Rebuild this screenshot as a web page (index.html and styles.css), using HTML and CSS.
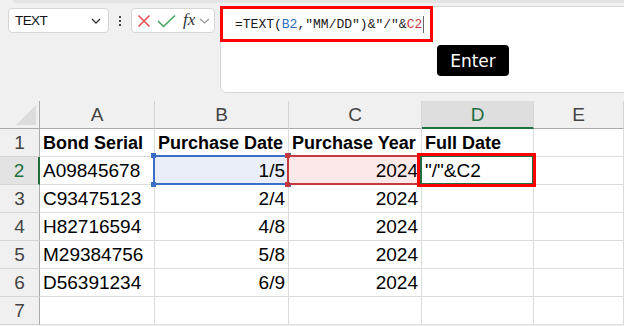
FILE: index.html
```html
<!DOCTYPE html>
<html>
<head>
<meta charset="utf-8">
<link rel="stylesheet" href="styles.css">
</head>
<body>
<div class="topband"></div>
<div class="bar">
  <div class="namebox">
    <span class="nb-text">TEXT</span>
    <svg class="nb-chev" width="10" height="6" viewBox="0 0 10 6"><polyline points="1,1 5,5 9,1" fill="none" stroke="#333" stroke-width="1.3"/></svg>
  </div>
  <div class="dots"><i></i><i></i><i></i></div>
  <div class="fxbox">
    <svg class="ic" width="14" height="14" viewBox="0 0 14 14"><path d="M1.5 1.5 L12.5 12.5 M12.5 1.5 L1.5 12.5" stroke="#e5484d" stroke-width="1.5" fill="none"/></svg>
    <svg class="ic" width="19" height="14" viewBox="0 0 19 14"><polyline points="1,7 6.5,12.5 18,1.5" stroke="#3da35a" stroke-width="1.5" fill="none"/></svg>
    <span class="fx">fx</span>
    <svg class="fx-chev" width="11" height="6" viewBox="0 0 11 6"><polyline points="1,1 5.5,5 10,1" fill="none" stroke="#999" stroke-width="1.2"/></svg>
  </div>
  <div class="formula">
    <div class="annot"><span class="ftext">=TEXT(<span class="fb">B2</span>,"MM/DD")&amp;"/"&amp;<span class="fc">C2</span></span><span class="caret"></span></div>
    <div class="enter">Enter</div>
  </div>
</div>
<div class="sheet">
  <div class="corner"><svg width="20" height="20" viewBox="0 0 20 20"><polygon points="20,0 20,20 0,20" fill="#dcdcdc"/></svg></div>
  <div class="ch">A</div><div class="ch">B</div><div class="ch">C</div><div class="ch ch-sel">D</div><div class="ch">E</div>

  <div class="rh">1</div>
  <div class="c b">Bond Serial</div><div class="c b">Purchase Date</div><div class="c b">Purchase Year</div><div class="c b">Full Date</div><div class="c"></div>

  <div class="rh rh-sel">2</div>
  <div class="c">A09845678</div>
  <div class="c r ref-b">1/5<i class="box"></i><i class="sq tl"></i><i class="sq tr"></i><i class="sq bl"></i><i class="sq br"></i></div>
  <div class="c r ref-c">2024<i class="box"></i><i class="sq tl"></i><i class="sq tr"></i><i class="sq bl"></i><i class="sq br"></i></div>
  <div class="c active">"/"&amp;C2<i class="green"></i><i class="redmark"></i></div>
  <div class="c"></div>

  <div class="rh">3</div>
  <div class="c">C93475123</div><div class="c r">2/4</div><div class="c r">2024</div><div class="c"></div><div class="c"></div>

  <div class="rh">4</div>
  <div class="c">H82716594</div><div class="c r">4/8</div><div class="c r">2024</div><div class="c"></div><div class="c"></div>

  <div class="rh">5</div>
  <div class="c">M29384756</div><div class="c r">5/8</div><div class="c r">2024</div><div class="c"></div><div class="c"></div>

  <div class="rh">6</div>
  <div class="c">D56391234</div><div class="c r">6/9</div><div class="c r">2024</div><div class="c"></div><div class="c"></div>

  <div class="rh">7</div>
  <div class="c"></div><div class="c"></div><div class="c"></div><div class="c"></div><div class="c"></div>
</div>
</body>
</html>
```
FILE: styles.css
```css
* { box-sizing: border-box; }
html, body { margin: 0; padding: 0; }
body {
  width: 624px;
  height: 326px;
  overflow: hidden;
  background: #f0f0f0;
  font-family: "Liberation Sans", Arial, sans-serif;
}
.topband {
  height: 3px;
  margin-left: 13px;
  background: #e3e3e3;
  border-bottom-left-radius: 4px;
}
.bar {
  display: flex;
  align-items: flex-start;
  height: 98px;
}
.namebox {
  margin: 5px 0 0 8px;
  width: 101px;
  height: 25px;
  background: #fff;
  border: 1px solid #d6d6d6;
  border-radius: 4px;
  display: flex;
  align-items: center;
  justify-content: space-between;
  padding: 0 7px 0 6px;
}
.nb-text {
  font-family: "Liberation Sans", Arial, sans-serif;
  font-size: 13.5px;
  letter-spacing: -0.6px;
  color: #111;
}
.dots {
  width: 22px;
  height: 25px;
  margin-top: 5px;
  display: flex;
  flex-direction: column;
  align-items: center;
  justify-content: center;
  gap: 2px;
}
.dots i {
  display: block;
  width: 2px;
  height: 2px;
  background: #444;
}
.fxbox {
  margin-top: 5px;
  width: 84px;
  height: 25px;
  background: #fff;
  border: 1px solid #d6d6d6;
  border-radius: 4px;
  display: flex;
  align-items: center;
  padding-left: 5px;
  gap: 6px;
}
.fx {
  font-family: "Liberation Serif", "Times New Roman", serif;
  font-style: italic;
  font-size: 17px;
  color: #333;
  margin-left: 1px;
  margin-top: -2px;
}
.fx-chev { margin-left: -2px; }
.formula {
  margin: 3px -10px 0 5px;
  flex: 1;
  height: 87px;
  background: #fff;
  border: 1px solid #d6d6d6;
  border-radius: 6px 0 0 6px;
}
.annot {
  margin: -1px 0 0 -1px;
  width: 213px;
  height: 36px;
  border: 3px solid #ff0000;
  display: flex;
  align-items: center;
  padding-left: 12px;
}
.ftext {
  font-family: "Liberation Mono", "Courier New", monospace;
  font-size: 13px;
  color: #1a1a1a;
  white-space: pre;
}
.fb { color: #2e6cc0; }
.fc { color: #c43b3b; }
.caret {
  width: 1px;
  height: 17px;
  background: #666;
  margin-left: 1px;
}
.enter {
  margin: 3px 0 0 216px;
  width: 72px;
  height: 31px;
  background: #000;
  border-radius: 4px;
  color: #fff;
  font-family: "DejaVu Sans", sans-serif;
  font-size: 17px;
  display: flex;
  align-items: center;
  justify-content: center;
}
.sheet {
  display: grid;
  grid-template-columns: 40px 115px 134px 133px 112px 1fr;
  grid-auto-rows: 28px;
}
.corner {
  border-right: 1px solid #ababab;
  border-bottom: 1px solid #ababab;
  display: flex;
  align-items: flex-end;
  justify-content: flex-end;
  padding: 0 3px 3px 0;
}
.corner svg { display: block; }
.ch {
  border-right: 1px solid #d5d5d5;
  border-bottom: 1px solid #ababab;
  display: flex;
  align-items: center;
  justify-content: center;
  font-size: 19px;
  color: #444;
}
.ch-sel {
  background: #dedede;
  color: #1e6e3f;
  border-bottom: 2px solid #1e6e3f;
  padding-top: 1px;
}
.rh {
  border-right: 1px solid #ababab;
  border-bottom: 1px solid #d5d5d5;
  display: flex;
  align-items: center;
  justify-content: center;
  font-size: 19px;
  color: #444;
}
.rh-sel {
  background: #e3e3e3;
  color: #1e6e3f;
  border-right: 2px solid #1e6e3f;
}
.c {
  position: relative;
  background: #fff;
  border-right: 1px solid #dcdcdc;
  border-bottom: 1px solid #dcdcdc;
  display: flex;
  align-items: center;
  padding: 1px 3px 0 3px;
  font-size: 19px;
  color: #000;
  white-space: nowrap;
}
.c.b {
  font-weight: bold;
  font-size: 18px;
}
.c.r { justify-content: flex-end; }
.ref-b { background: #e9eef8; z-index: 1; }
.ref-c { background: #fbe9e9; z-index: 2; }
.active { padding-left: 3px; z-index: 3; }
.box {
  position: absolute;
  left: -2px;
  top: -2px;
  right: -1px;
  bottom: -1px;
  border: 2px solid #3a6dc4;
}
.ref-c .box { border-color: #c3393e; }
.sq {
  position: absolute;
  width: 5px;
  height: 5px;
  background: #3a6dc4;
}
.ref-c .sq { background: #c3393e; }
.sq.tl { left: -4px; top: -4px; }
.sq.tr { right: -3px; top: -4px; }
.sq.bl { left: -4px; bottom: -3px; }
.sq.br { right: -3px; bottom: -3px; }
.green {
  position: absolute;
  left: -2px;
  top: -2px;
  right: -1px;
  bottom: -1px;
  border: 2px solid #1e6e3f;
}
.redmark {
  position: absolute;
  left: -5px;
  top: -4px;
  right: -3px;
  bottom: -3px;
  border: 3px solid #ff0000;
}
```
